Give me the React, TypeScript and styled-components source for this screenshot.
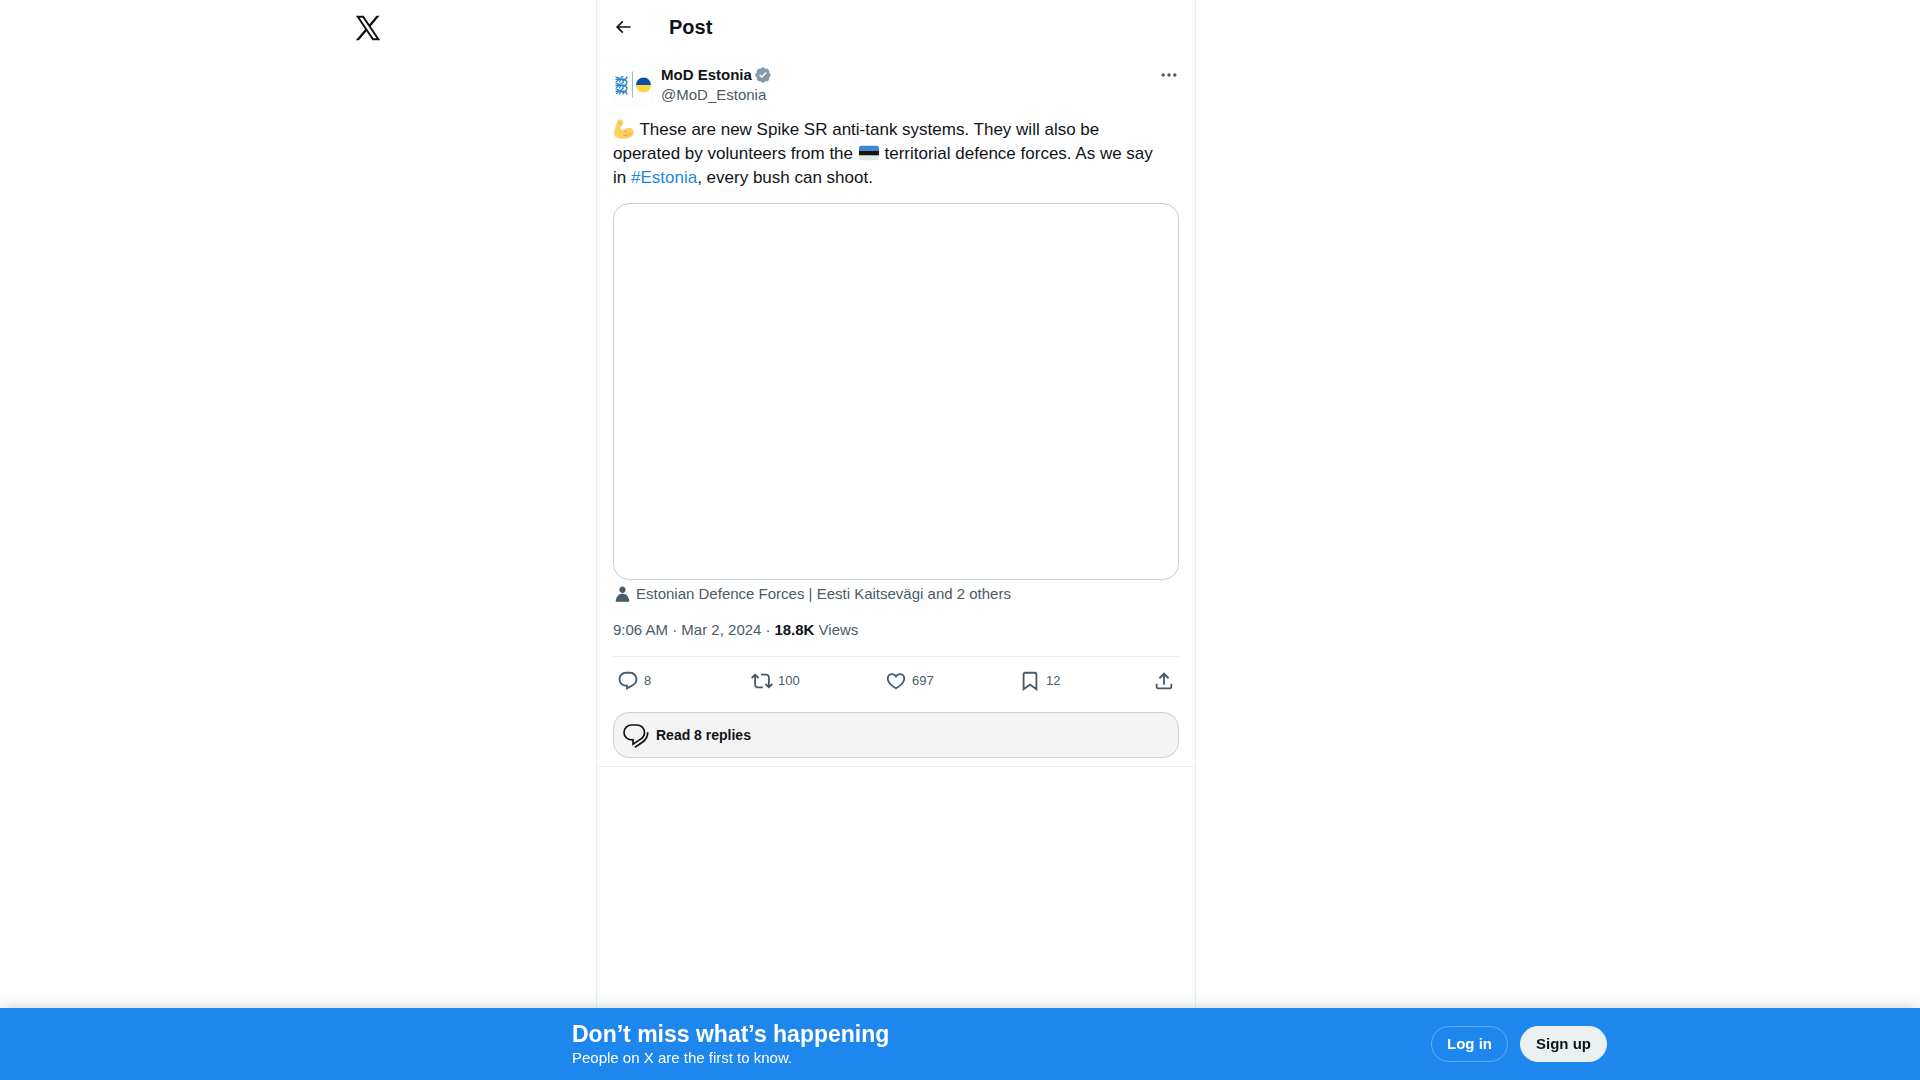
import React from "react";
import styled, { createGlobalStyle } from "styled-components";

const color = {
  ink: "#0f1419",
  muted: "#4a5a67",
  line: "#eaeef0",
  outline: "#c3d0d6",
  link: "#1d87e0",
  brand: "#1d87ee",
};

const GlobalStyle = createGlobalStyle`
  *, *::before, *::after { box-sizing: border-box; }
  body {
    margin: 0;
    background: #fff;
    color: ${color.ink};
    font-family: "Liberation Sans", Arial, sans-serif;
    font-size: 15px;
    line-height: 20px;
  }
  a { color: inherit; text-decoration: none; }
  button { font: inherit; color: inherit; background: none; border: 0; padding: 0; cursor: pointer; }
  h1, h2, p { margin: 0; }
`;

const Page = styled.div`
  display: flex;
  justify-content: center;
  min-height: 100vh;
`;

const Shell = styled.div`
  display: grid;
  grid-template-columns: 252px minmax(0, 600px) 380px;
`;

const SideNav = styled.header`
  padding-top: 2px;
`;

const LogoLink = styled.a`
  display: flex;
  align-items: center;
  justify-content: center;
  width: 48px;
  height: 52px;
`;

const Column = styled.main`
  border-left: 1px solid ${color.line};
  border-right: 1px solid ${color.line};
`;

const ColumnHeader = styled.div`
  display: flex;
  align-items: center;
  gap: 36px;
  height: 53px;
  padding: 0 16px;
`;

const BackButton = styled.button`
  display: flex;
  justify-content: center;
  width: 20px;
`;

const Title = styled.h2`
  font-size: 20px;
  line-height: 24px;
  font-weight: 700;
`;

const Article = styled.article`
  display: flex;
  flex-direction: column;
  padding: 12px 16px 8px;
  border-bottom: 1px solid ${color.line};
`;

const AuthorRow = styled.div`
  display: flex;
  align-items: flex-start;
  gap: 8px;
`;

const AuthorNames = styled.div`
  display: flex;
  flex: 1;
  flex-direction: column;
`;

const DisplayName = styled.a`
  display: flex;
  align-items: center;
  gap: 2px;
  font-weight: 700;
`;

const Handle = styled.a`
  color: ${color.muted};
`;

const MoreButton = styled.button`
  display: flex;
  color: ${color.muted};
`;

const PostText = styled.p`
  padding: 13px 16px 13px 0;
  font-size: 17px;
  line-height: 24px;

  svg {
    margin: 0 1px;
    vertical-align: -4px;
  }
`;

const Hashtag = styled.a`
  && { color: ${color.link}; }
`;

const Media = styled.div`
  aspect-ratio: 3 / 2;
  border: 1px solid ${color.outline};
  border-radius: 16px;
`;

const TaggedPeople = styled.a`
  display: flex;
  align-items: center;
  gap: 4px;
  margin-top: 4px;
  && { color: ${color.muted}; }
`;

const Meta = styled.div`
  display: flex;
  gap: 4px;
  padding: 16px 0;
  color: ${color.muted};
  border-bottom: 1px solid ${color.line};

  strong { color: ${color.ink}; }
`;

const Actions = styled.div`
  display: flex;
  align-items: center;
  height: 48px;
  padding: 0 4px;
  color: ${color.muted};
`;

const ActionSlot = styled.div<{ $last?: boolean }>`
  display: flex;
  flex: ${(p) => (p.$last ? "0 0 auto" : "1 1 0")};
`;

const ActionButton = styled.button`
  display: flex;
  align-items: center;
  gap: 5px;
  font-size: 13px;
`;

const RepliesLink = styled.a`
  display: flex;
  align-items: center;
  gap: 7px;
  height: 46px;
  margin-top: 7px;
  padding: 0 8px;
  border: 1px solid ${color.outline};
  border-radius: 16px;
  background: #f4f4f4;
  font-size: 14px;
  font-weight: 700;
`;

const BottomBar = styled.div`
  position: fixed;
  right: 0;
  bottom: 0;
  left: 0;
  display: flex;
  justify-content: center;
  background: ${color.brand};
  color: #fff;
  box-shadow: 0 0 15px rgba(101, 119, 134, 0.35);
`;

const BarInner = styled.div`
  display: flex;
  align-items: center;
  justify-content: space-between;
  width: 100%;
  max-width: 1294px;
  height: 72px;
  padding-left: 259px;
`;

const BarTitle = styled.h1`
  font-size: 23px;
  line-height: 28px;
  font-weight: 700;
`;

const BarActions = styled.div`
  display: flex;
  gap: 12px;
`;

const PillLink = styled.a<{ $filled?: boolean }>`
  display: flex;
  align-items: center;
  height: 36px;
  padding: 0 15px;
  border: 1px solid ${(p) => (p.$filled ? "#ebf0f1" : "#61acf4")};
  border-radius: 18px;
  background: ${(p) => (p.$filled ? "#ebf0f1" : "transparent")};
  font-weight: 700;
  && { color: ${(p) => (p.$filled ? color.ink : "#fff")}; }
`;

type IconProps = { d: string; size: number; box?: number; fill?: string };

function Icon({ d, size, box = 24, fill = "currentColor" }: IconProps) {
  return (
    <svg width={size} height={size} viewBox={`0 0 ${box} ${box}`} fill={fill} aria-hidden="true">
      <path d={d} />
    </svg>
  );
}

const paths = {
  logo: "M21.742 21.75l-7.563-11.179 7.056-8.321h-2.456l-5.691 6.714-4.54-6.714H2.359l7.29 10.776L2.25 21.75h2.456l6.035-7.118 4.818 7.118h6.191-.008zM7.739 3.818L18.81 20.182h-2.447L5.29 3.818h2.447z",
  back: "M7.414 13l5.043 5.04-1.414 1.42L3.586 12l7.457-7.46 1.414 1.42L7.414 11H21v2H7.414z",
  more: "M3 12c0-1.1.9-2 2-2s2 .9 2 2-.9 2-2 2-2-.9-2-2zm9 2c1.1 0 2-.9 2-2s-.9-2-2-2-2 .9-2 2 .9 2 2 2zm7 0c1.1 0 2-.9 2-2s-.9-2-2-2-2 .9-2 2 .9 2 2 2z",
  verified:
    "M20.396 11c-.018-.646-.215-1.275-.57-1.816-.354-.54-.852-.972-1.438-1.246.223-.607.27-1.264.14-1.897-.131-.634-.437-1.218-.882-1.687-.47-.445-1.053-.75-1.687-.882-.633-.13-1.29-.083-1.897.14-.273-.587-.704-1.086-1.245-1.44S11.647 1.62 11 1.604c-.646.017-1.273.213-1.813.568s-.969.854-1.24 1.44c-.608-.223-1.267-.272-1.902-.14-.635.13-1.22.436-1.69.882-.445.47-.749 1.055-.878 1.688-.13.633-.08 1.29.144 1.896-.587.274-1.087.705-1.443 1.245-.356.54-.555 1.17-.574 1.817.02.647.218 1.276.574 1.817.356.54.856.972 1.443 1.245-.224.606-.274 1.263-.144 1.896.13.634.433 1.218.877 1.688.47.443 1.054.747 1.687.878.633.132 1.29.084 1.897-.136.274.586.705 1.084 1.246 1.439.54.354 1.17.551 1.816.569.647-.016 1.276-.213 1.817-.567s.972-.854 1.245-1.44c.604.239 1.266.296 1.903.164.636-.132 1.22-.447 1.68-.907.46-.46.776-1.044.908-1.681s.075-1.299-.165-1.903c.586-.274 1.084-.705 1.439-1.246.354-.54.551-1.17.569-1.816zM9.662 14.85l-3.429-3.428 1.293-1.302 2.072 2.072 4.4-4.794 1.347 1.246z",
  person:
    "M17.863 13.44c1.477 1.58 2.366 3.8 2.632 6.46l.11 1.1H3.395l.11-1.1c.266-2.66 1.155-4.88 2.632-6.46C7.627 11.85 9.648 11 12 11s4.373.85 5.863 2.44zM12 2C9.791 2 8 3.79 8 6s1.791 4 4 4 4-1.79 4-4-1.791-4-4-4z",
  reply:
    "M1.751 10c0-4.42 3.584-8 8.005-8h4.366c4.49 0 8.129 3.64 8.129 8.13 0 2.96-1.607 5.68-4.196 7.11l-8.054 4.46v-3.69h-.067c-4.49.1-8.183-3.51-8.183-8.01zm8.005-6c-3.317 0-6.005 2.69-6.005 6 0 3.37 2.77 6.08 6.138 6.01l.351-.01h1.761v2.3l5.087-2.81c1.951-1.08 3.163-3.13 3.163-5.36 0-3.39-2.744-6.13-6.129-6.13H9.756z",
  repost:
    "M4.5 3.88l4.432 4.14-1.364 1.46L5.5 7.55V16c0 1.1.896 2 2 2H13v2H7.5c-2.209 0-4-1.79-4-4V7.55L1.432 9.48.068 8.02 4.5 3.88zM16.5 6H11V4h5.5c2.209 0 4 1.79 4 4v8.45l2.068-1.93 1.364 1.46-4.432 4.14-4.432-4.14 1.364-1.46 2.068 1.93V8c0-1.1-.896-2-2-2z",
  like: "M16.697 5.5c-1.222-.06-2.679.51-3.89 2.16l-.805 1.09-.806-1.09C9.984 6.01 8.526 5.44 7.304 5.5c-1.243.07-2.349.78-2.91 1.91-.552 1.12-.633 2.78.479 4.82 1.074 1.97 3.257 4.27 7.129 6.61 3.87-2.34 6.052-4.64 7.126-6.61 1.111-2.04 1.03-3.7.477-4.82-.561-1.13-1.666-1.84-2.908-1.91zm4.187 7.69c-1.351 2.48-4.001 5.12-8.379 7.67l-.503.3-.504-.3c-4.379-2.55-7.029-5.19-8.382-7.67-1.36-2.5-1.41-4.86-.514-6.67.887-1.79 2.647-2.91 4.601-3.01 1.651-.09 3.368.56 4.798 2.01 1.429-1.45 3.146-2.1 4.796-2.01 1.954.1 3.714 1.22 4.601 3.01.896 1.81.846 4.17-.514 6.67z",
  bookmark:
    "M4 4.5C4 3.12 5.119 2 6.5 2h11C18.881 2 20 3.12 20 4.5v18.44l-8-5.71-8 5.71V4.5zM6.5 4c-.276 0-.5.22-.5.5v14.56l6-4.29 6 4.29V4.5c0-.28-.224-.5-.5-.5h-11z",
  share:
    "M12 2.59l5.7 5.7-1.41 1.42L13 6.41V16h-2V6.41l-3.3 3.3-1.41-1.42L12 2.59zM21 15l-.02 3.51c0 1.38-1.12 2.49-2.5 2.49H5.5C4.11 21 3 19.88 3 18.5V15h2v3.5c0 .28.22.5.5.5h12.98c.28 0 .5-.22.5-.5L19 15h2z",
};

function Lion({ y }: { y: number }) {
  return (
    <g transform={`translate(2 ${y})`} stroke="#2f80cc" fill="none" strokeLinecap="round">
      <path strokeWidth="2.2" d="M4 3c2 0 3 .8 6 .6" />
      <path
        strokeWidth="1.3"
        d="M1 1l2.4.8M1 3.400l2.200-.4M4 3.500L1.500 5.500M5.500 4L4.500 6M8.500 4l-.5 2M10.500 4l1.500 2M10.500 3c2-.6 0-1.600 1.500-2.200M6 1.500L8 .6"
      />
    </g>
  );
}

function Avatar() {
  return (
    <svg width="40" height="40" viewBox="0 0 40 40" role="img" aria-label="MoD Estonia">
      <rect width="39" height="39" rx="1" fill="#fdfefe" stroke="#f6f8f9" />
      <Lion y={11} />
      <Lion y={17} />
      <Lion y={23} />
      <path d="M19.500 6.500v26" stroke="#9db9cf" />
      <path d="M23 20a7.500 7.500 0 0 1 15 0z" fill="#0d4da6" />
      <path d="M23 20a7.500 7.500 0 0 0 15 0z" fill="#fbd73c" />
    </svg>
  );
}

function FlexedArm() {
  return (
    <svg width="20" height="20" viewBox="0 0 36 36" role="img" aria-label="Flexed biceps">
      <path
        fill="#fdd05c"
        d="M16.500 8.500c.3-2.600 0-5-1.800-6.600C12.800.3 10.200.2 8.400 1.600 6.800 2.800 5.700 5 4.600 8 2.500 13.500.6 21 .6 27.500c0 2 .9 3.700 2.700 4.800 3.700 2.300 9 3.200 14.700 3.200 8.500 0 17.400-3.600 17.400-11.200 0-5-3.500-8.600-8.400-8.600-3.700 0-6.600 1.700-8.100 4.400-2-.9-4.300-.9-6.300.1-.9-2.900-.8-6.100-.3-8.700 1.900.1 3.700-.8 4.200-3z"
      />
      <path
        fill="none"
        stroke="#ef9645"
        strokeWidth="1.8"
        strokeLinecap="round"
        d="M19 20.200c1.400.7 2.500 1.700 3 3M18 29.500c5 1.200 9.500-.5 11.500-4M9.500 6.500c1 1.200 1.600 2.500 3 4.200"
      />
    </svg>
  );
}

function EstoniaFlag() {
  return (
    <svg width="20" height="20" viewBox="0 0 36 36" role="img" aria-label="Flag of Estonia">
      <path fill="#3e87d8" d="M0 14V9a4 4 0 0 1 4-4h28a4 4 0 0 1 4 4v5z" />
      <path fill="#141414" d="M0 14h36v8.700H0z" />
      <path fill="#e6e7e8" d="M0 22.700V27a4 4 0 0 0 4 4h28a4 4 0 0 0 4-4v-4.300z" />
    </svg>
  );
}

function RepliesIcon() {
  return (
    <svg
      width="27"
      height="27"
      viewBox="0 0 27 27"
      fill="none"
      stroke={color.ink}
      strokeWidth="1.7"
      aria-hidden="true"
    >
      <path d="M9.800 3h4.800c4.700 0 7.900 3.300 7.900 7.400 0 3-1.600 5.300-4.300 7l-7.200 4.700v-4.200C5.500 18 2 14.800 2 10.500 2 6.200 5.300 3 9.800 3z" />
      <path d="M25.700 10.300c.1 4.600-1.900 7.500-5 9.700-2.500 1.900-4.900 3.400-7.900 5.200" />
    </svg>
  );
}

const actions = [
  { label: "Reply", icon: paths.reply, count: "8" },
  { label: "Repost", icon: paths.repost, count: "100" },
  { label: "Like", icon: paths.like, count: "697" },
  { label: "Bookmark", icon: paths.bookmark, count: "12" },
  { label: "Share post", icon: paths.share, count: "" },
];

export default function App() {
  return (
    <>
      <GlobalStyle />
      <Page>
        <Shell>
          <SideNav>
            <LogoLink href="#" aria-label="X">
              <Icon d={paths.logo} size={30} />
            </LogoLink>
          </SideNav>
          <Column>
            <ColumnHeader>
              <BackButton aria-label="Back">
                <Icon d={paths.back} size={20} />
              </BackButton>
              <Title>Post</Title>
            </ColumnHeader>
            <Article>
              <AuthorRow>
                <Avatar />
                <AuthorNames>
                  <DisplayName href="#">
                    MoD Estonia
                    <Icon d={paths.verified} size={18} box={22} fill="#829aab" />
                  </DisplayName>
                  <Handle href="#">@MoD_Estonia</Handle>
                </AuthorNames>
                <MoreButton aria-label="More">
                  <Icon d={paths.more} size={20} />
                </MoreButton>
              </AuthorRow>
              <PostText>
                <FlexedArm /> These are new Spike SR anti-tank systems. They will also be operated by
                volunteers from the <EstoniaFlag /> territorial defence forces. As we say in{" "}
                <Hashtag href="#">#Estonia</Hashtag>, every bush can shoot.
              </PostText>
              <Media />
              <TaggedPeople href="#">
                <Icon d={paths.person} size={19} />
                Estonian Defence Forces | Eesti Kaitsevägi and 2 others
              </TaggedPeople>
              <Meta>
                <a href="#">9:06 AM · Mar 2, 2024</a>
                <span>·</span>
                <span>
                  <strong>18.8K</strong> Views
                </span>
              </Meta>
              <Actions>
                {actions.map((a, i) => (
                  <ActionSlot key={a.label} $last={i === actions.length - 1}>
                    <ActionButton aria-label={a.label}>
                      <Icon d={a.icon} size={22} />
                      {a.count && <span>{a.count}</span>}
                    </ActionButton>
                  </ActionSlot>
                ))}
              </Actions>
              <RepliesLink href="#">
                <RepliesIcon />
                Read 8 replies
              </RepliesLink>
            </Article>
          </Column>
        </Shell>
      </Page>
      <BottomBar>
        <BarInner>
          <div>
            <BarTitle>Don’t miss what’s happening</BarTitle>
            <p>People on X are the first to know.</p>
          </div>
          <BarActions>
            <PillLink href="#">Log in</PillLink>
            <PillLink href="#" $filled>
              Sign up
            </PillLink>
          </BarActions>
        </BarInner>
      </BottomBar>
    </>
  );
}
